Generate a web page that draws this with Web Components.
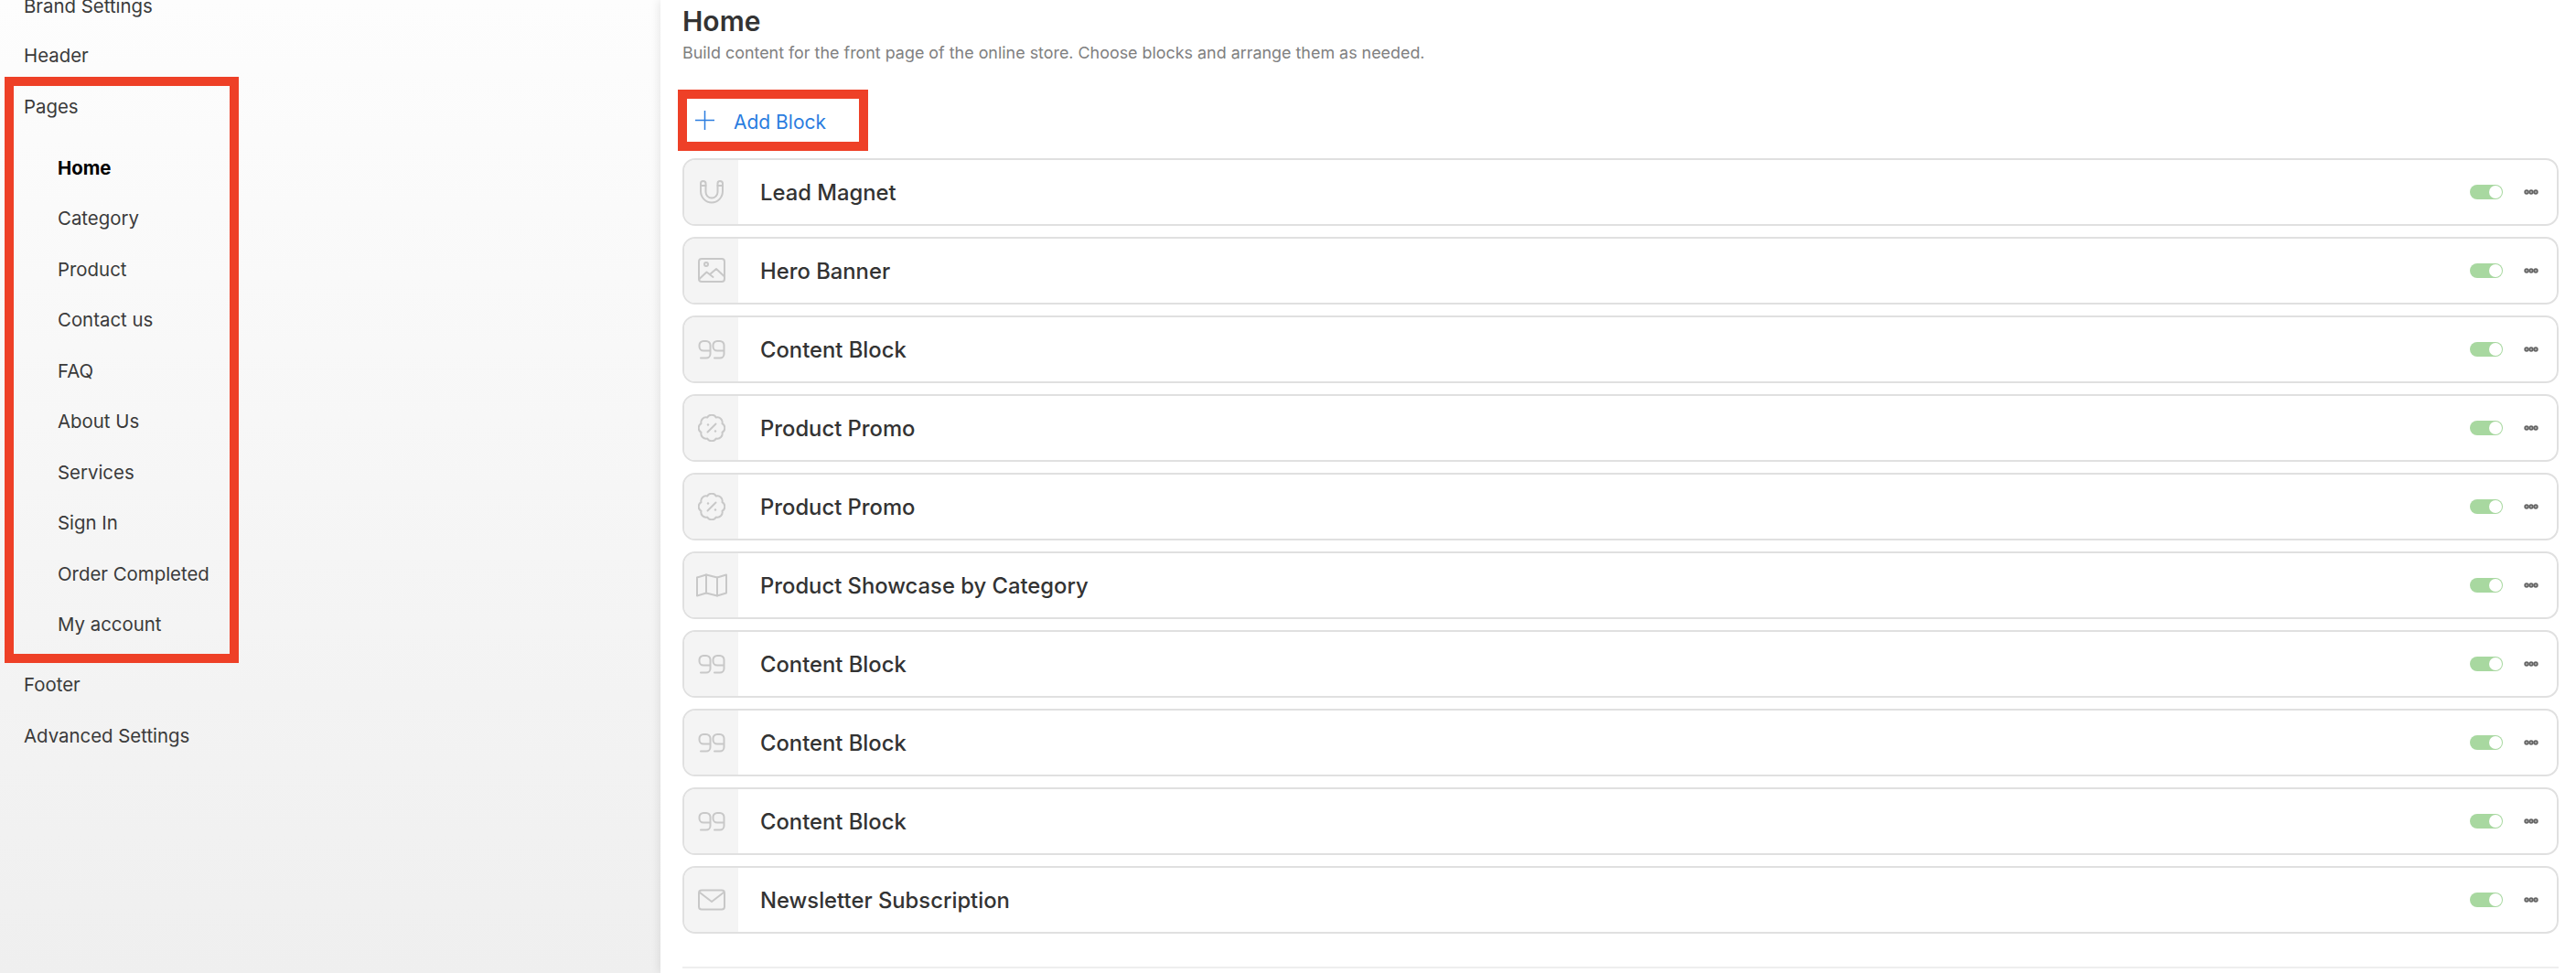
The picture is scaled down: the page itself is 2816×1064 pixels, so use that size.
<!DOCTYPE html>
<html lang="en">
<head>
<meta charset="utf-8">
<title>Home</title>
<style>
html,body{margin:0;height:100%;overflow:hidden;background:#fff;font-family:Inter,"Liberation Sans",sans-serif;}
</style>
</head>
<body>
<builder-page>
  <side-nav slot="side">
    <nav-item>Brand Settings</nav-item>
    <nav-item style="margin-top:10px">Header</nav-item>
    <nav-group>
      <nav-item slot="label">Pages</nav-item>
      <nav-item sub active>Home</nav-item>
      <nav-item sub>Category</nav-item>
      <nav-item sub>Product</nav-item>
      <nav-item sub>Contact us</nav-item>
      <nav-item sub>FAQ</nav-item>
      <nav-item sub>About Us</nav-item>
      <nav-item sub>Services</nav-item>
      <nav-item sub>Sign In</nav-item>
      <nav-item sub>Order Completed</nav-item>
      <nav-item sub>My account</nav-item>
    </nav-group>
    <nav-item style="margin-top:2px">Footer</nav-item>
    <nav-item style="margin-top:12px">Advanced Settings</nav-item>
  </side-nav>
  <page-content slot="main" heading="Home" note="Build content for the front page of the online store. Choose blocks and arrange them as needed.">
    <add-block slot="action">Add Block</add-block>
    <block-row icon="magnet">Lead Magnet</block-row>
    <block-row icon="image">Hero Banner</block-row>
    <block-row icon="quote">Content Block</block-row>
    <block-row icon="badge">Product Promo</block-row>
    <block-row icon="badge">Product Promo</block-row>
    <block-row icon="map">Product Showcase by Category</block-row>
    <block-row icon="quote">Content Block</block-row>
    <block-row icon="quote">Content Block</block-row>
    <block-row icon="quote">Content Block</block-row>
    <block-row icon="mail">Newsletter Subscription</block-row>
  </page-content>
</builder-page>

<script>
const ICONS = {
  magnet: '<svg width="30" height="30" viewBox="0 0 30 30"><path d="M3 5.500C3 3.800 4 3 5.500 3S8.500 3.800 8.500 5.500V15c0 3.600 2.900 6.500 6.500 6.500s6.500-2.900 6.500-6.500V5.500C21.500 3.800 22.500 3 24 3s3 .8 3 2.500V14c0 7-5.400 12.500-12 12.500S3 21 3 14Z"/><path d="M3 8h5.500M21.500 8H27"/></svg>',
  image: '<svg width="30" height="30" viewBox="0 0 30 30"><rect x="1" y="2" width="28" height="25" rx="3"/><circle cx="9" cy="8" r="2"/><path d="M1.500 24l8-7.500 7 5.500M13 19l7-6 8.500 8"/></svg>',
  quote: '<svg width="30" height="30" viewBox="0 0 30 30"><path d="M13.500 10.500a4.500 4.500 0 0 0-4.500-4.500H6a4.500 4.500 0 0 0-4.500 4.500v1.500a4.500 4.500 0 0 0 4.500 4.500h7.500M13.500 10.500v9.500a4.500 4.500 0 0 1-4.500 4.500H3"/><path d="M28.500 10.500a4.500 4.500 0 0 0-4.500-4.500H21a4.500 4.500 0 0 0-4.500 4.500v1.500a4.500 4.500 0 0 0 4.500 4.500h7.500M28.500 10.500v9.500a4.500 4.500 0 0 1-4.500 4.500H18"/></svg>',
  badge: '<svg width="30" height="30" viewBox="0 0 30 30"><path d="M19.800 3.500A5.500 5.500 0 0 1 26.500 10.200A5.500 5.500 0 0 1 26.500 19.800A5.500 5.500 0 0 1 19.800 26.500A5.500 5.500 0 0 1 10.200 26.500A5.500 5.500 0 0 1 3.500 19.800A5.500 5.500 0 0 1 3.500 10.200A5.500 5.500 0 0 1 10.200 3.500A5.500 5.500 0 0 1 19.800 3.500Z"/><path d="M10.500 19.500l9-9"/><circle class="dot" cx="11" cy="11.500" r="1.200"/><circle class="dot" cx="19" cy="18.500" r="1.200"/></svg>',
  map: '<svg width="34" height="26" viewBox="0 0 34 26"><path d="M1 4.500L11 1.500L23 4.500L33 1.500V21.500L23 24.500L11 21.500L1 24.500Z"/><path d="M11 1.500V21.500M23 4.500V24.500"/></svg>',
  mail: '<svg width="30" height="24" viewBox="0 0 30 24"><rect x="1" y="1.500" width="28" height="21" rx="3"/><path d="M2 4l13 10L28 4"/></svg>'
};

class BuilderPage extends HTMLElement{
  constructor(){
    super();
    this.attachShadow({mode:"open"});
    this.shadowRoot.innerHTML = `
      <style>
        :host{display:flex;width:2816px;height:1064px;overflow:hidden;}
        .main{flex:1;min-width:0;background:#fff;box-shadow:-3px 0 8px rgba(0,0,0,.07);position:relative;}
      </style>
      <slot name="side"></slot>
      <div class="main"><slot name="main"></slot></div>`;
  }
}
class SideNav extends HTMLElement{
  constructor(){
    super();
    this.attachShadow({mode:"open"});
    this.shadowRoot.innerHTML = `
      <style>
        :host{display:block;flex:none;width:722px;height:1064px;overflow:hidden;background:linear-gradient(#fdfdfd,#efefef);}
        .list{display:flex;flex-direction:column;margin-top:-16px;}
      </style>
      <div class="list"><slot></slot></div>`;
  }
}
class NavItem extends HTMLElement{
  constructor(){
    super();
    this.attachShadow({mode:"open"});
    this.shadowRoot.innerHTML = `
      <style>
        :host{display:flex;align-items:center;height:44px;padding-left:26px;font-size:20.4px;color:#3a3a3a;white-space:nowrap;}
        :host([sub]){padding-left:48px;}
        :host([slot=label]){padding-left:11px;}
        :host([active]){font-weight:700;color:#000;}
      </style>
      <slot></slot>`;
  }
}
class NavGroup extends HTMLElement{
  constructor(){
    super();
    this.attachShadow({mode:"open"});
    this.shadowRoot.innerHTML = `
      <style>
        :host{display:block;box-sizing:border-box;width:256px;margin:2px 0 0 5px;border:10px solid #ee4027;padding:0 0 10px;}
        .subs{display:flex;flex-direction:column;gap:11.5px;margin-top:23px;}
      </style>
      <slot name="label"></slot>
      <div class="subs"><slot></slot></div>`;
  }
}
class PageContent extends HTMLElement{
  constructor(){
    super();
    this.attachShadow({mode:"open"});
    this.shadowRoot.innerHTML = `
      <style>
        :host{display:block;box-sizing:border-box;height:1064px;padding:5px 19px 0 24px;}
        h1{margin:0;font-size:30px;line-height:36px;font-weight:600;color:#333;}
        p{margin:5px 0 0;font-size:17.9px;line-height:24px;color:#808080;white-space:nowrap;}
        .rows{display:flex;flex-direction:column;gap:12px;}
        hr{border:0;border-top:2px solid #eee;margin:36px 0 0;}
      </style>
      <h1></h1>
      <p></p>
      <slot name="action"></slot>
      <div class="rows"><slot></slot></div>
      <hr>`;
    this.shadowRoot.querySelector("h1").textContent = this.getAttribute("heading");
    this.shadowRoot.querySelector("p").textContent = this.getAttribute("note");
  }
}
class AddBlock extends HTMLElement{
  constructor(){
    super();
    this.attachShadow({mode:"open"});
    this.shadowRoot.innerHTML = `
      <style>
        :host{display:flex;align-items:center;box-sizing:border-box;width:208px;height:67px;margin:28px 0 8px -5px;border:10px solid #ee4027;padding:3px 0 0 9px;gap:21px;font-size:21px;color:#2b7de0;background:#fff;}
        svg{flex:none;display:block;margin-top:-4px;}
      </style>
      <svg width="21" height="21" viewBox="0 0 21 21" fill="none" stroke="#2b7de0" stroke-width="1.500"><path d="M10.500 0V21M0 10.500H21"/></svg>
      <slot></slot>`;
  }
}
class ToggleSwitch extends HTMLElement{
  constructor(){
    super();
    this.attachShadow({mode:"open"});
    this.shadowRoot.innerHTML = `
      <style>
        :host{display:block;box-sizing:border-box;width:36px;height:16px;border-radius:8px;background:#a8d8a0;position:relative;}
        i{position:absolute;right:1px;top:1px;width:14px;height:14px;border-radius:50%;background:#fff;}
      </style>
      <i></i>`;
  }
}
class BlockRow extends HTMLElement{
  constructor(){
    super();
    this.attachShadow({mode:"open"});
    const icon = ICONS[this.getAttribute("icon")] || "";
    this.shadowRoot.innerHTML = `
      <style>
        :host{display:flex;align-items:center;box-sizing:border-box;height:74px;border:2px solid #e0e0e0;border-radius:14px;overflow:hidden;background:#fff;}
        .icon{flex:none;width:59px;align-self:stretch;background:#f4f4f4;display:flex;align-items:center;justify-content:center;}
        .icon svg{fill:none;stroke:#c8c8c8;stroke-width:2;stroke-linejoin:round;stroke-linecap:round;display:block;}
        .icon svg .dot{fill:#c8c8c8;stroke:none;}
        .name{flex:1;padding-left:24px;font-size:23.8px;font-weight:500;color:#333;white-space:nowrap;}
        toggle-switch{flex:none;margin-right:23px;}
        .more{flex:none;display:block;margin-right:20px;}
      </style>
      <div class="icon">${icon}</div>
      <div class="name"><slot></slot></div>
      <toggle-switch></toggle-switch>
      <svg class="more" width="16" height="6" viewBox="0 0 16 6" fill="#fff" stroke="#666" stroke-width="2"><circle cx="3" cy="3" r="1.700"/><circle cx="8" cy="3" r="1.700"/><circle cx="13" cy="3" r="1.700"/></svg>`;
  }
}
customElements.define("builder-page",BuilderPage);
customElements.define("side-nav",SideNav);
customElements.define("nav-item",NavItem);
customElements.define("nav-group",NavGroup);
customElements.define("page-content",PageContent);
customElements.define("add-block",AddBlock);
customElements.define("toggle-switch",ToggleSwitch);
customElements.define("block-row",BlockRow);
</script>
</body>
</html>
